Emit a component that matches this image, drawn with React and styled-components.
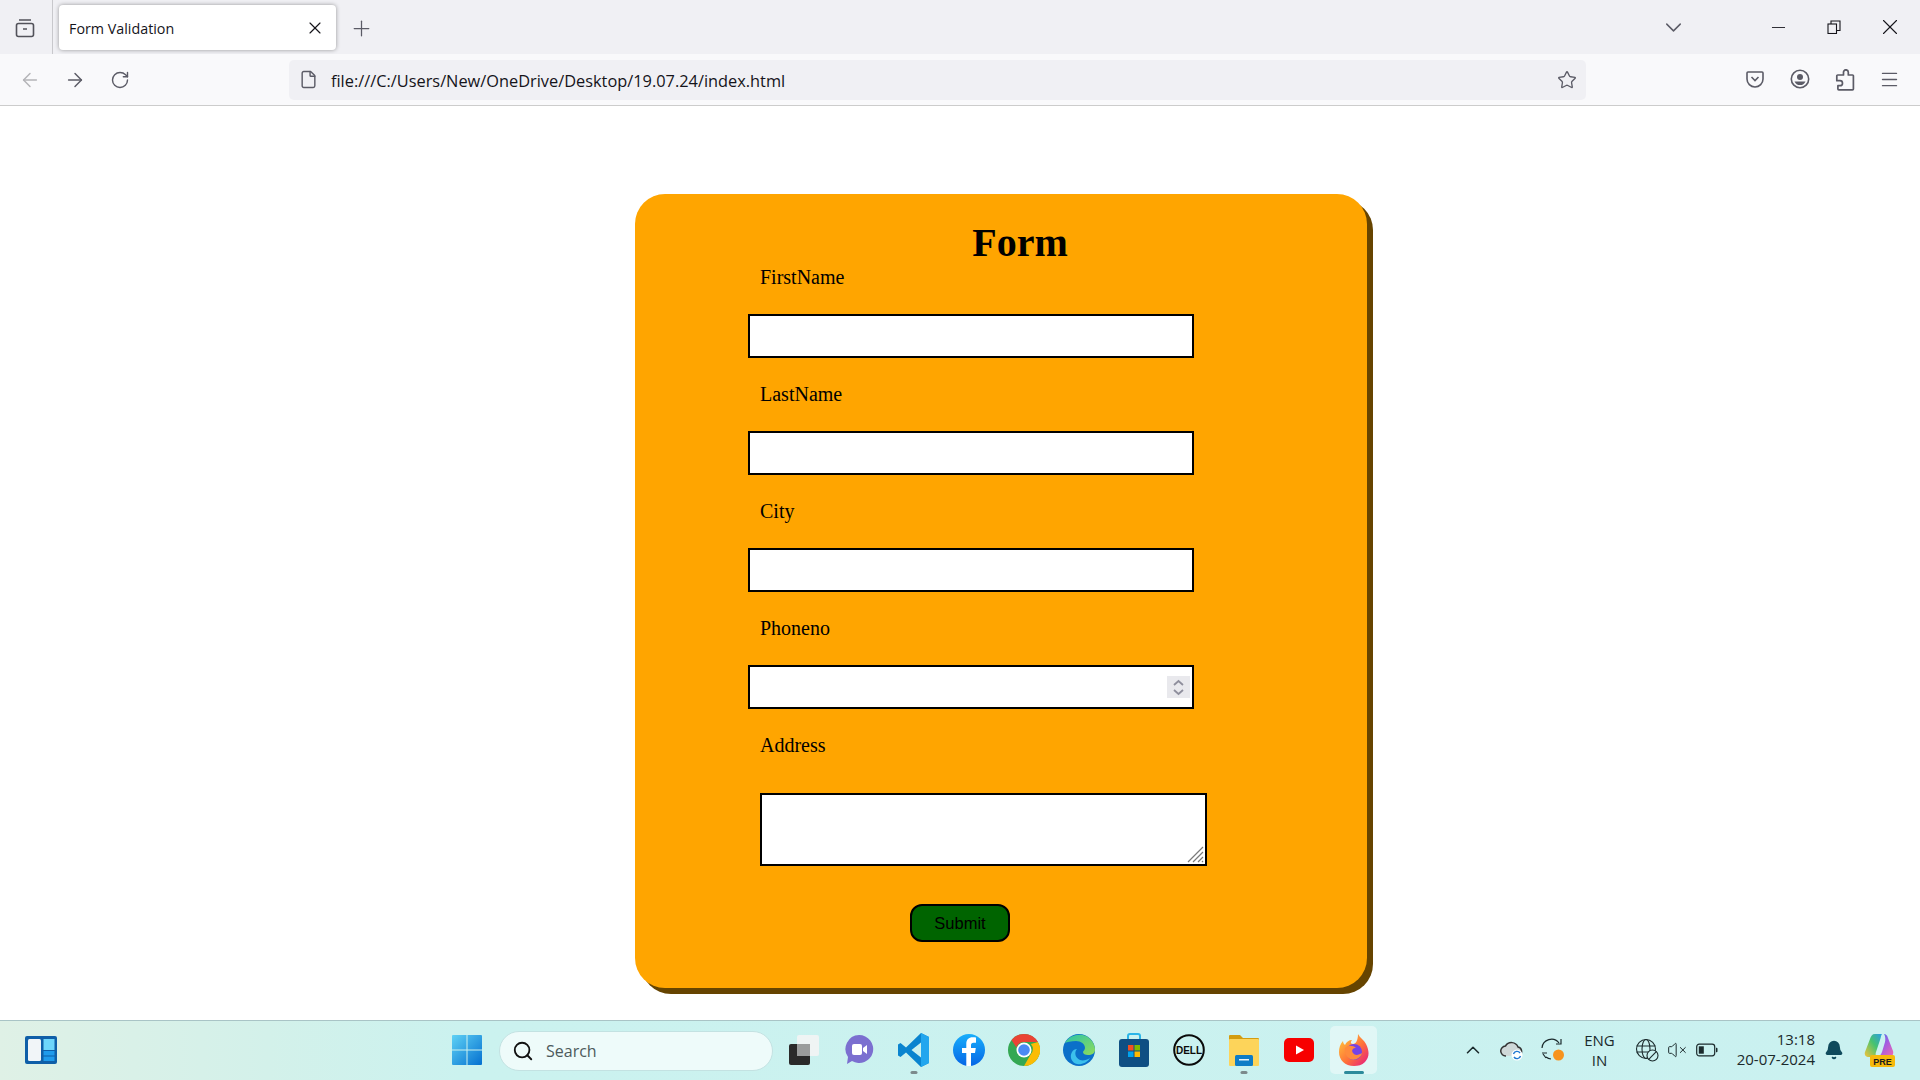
import React from 'react';
import styled, { createGlobalStyle } from 'styled-components';
import { ArrowLeft, ArrowRight, RotateCw, Star, Plus, X, ChevronDown, ChevronUp, Minus, Menu, Search, Bell, VolumeX, File } from 'lucide-react';

const Global = createGlobalStyle`
  html, body { margin: 0; padding: 0; background: #fff; overflow: hidden; }
  * { box-sizing: border-box; }
`;
const Screen = styled.div`
  width: 1920px; height: 1080px; display: flex; flex-direction: column;
  font-family: "Open Sans", "Noto Sans", sans-serif;
`;
const TitleBar = styled.div`
  height: 54px; background: #f0f0f4; display: flex; align-items: center; flex: none;
`;
const TabListSlot = styled.div`
  width: 53px; height: 54px; display: flex; align-items: center; justify-content: center;
  border-right: 1px solid #c8c8cc; color: #52525a; padding: 1px 2px 0 0;
`;
const Tab = styled.div`
  width: 277px; height: 45px; margin: 1px 0 0 6px; background: #fff; border-radius: 4px;
  box-shadow: 0 0 4px rgba(0,0,0,.38); display: flex; align-items: center; justify-content: space-between;
  padding: 1px 11px 0 10px; font-size: 14.3px; color: #15141a;
`;
const NewTab = styled.div`
  width: 30px; margin: 2px 0 0 10px; display: flex; justify-content: center; color: #5b5b66;
`;
const ListAll = styled.div`
  margin: 0 63px 0 auto; display: flex; color: #5b5b66;
`;
const WinBtn = styled.div`
  width: 56px; display: flex; align-items: center; justify-content: center; color: #15141a;
`;
const WinBtns = styled.div`
  display: flex; margin-right: 2px;
`;
const Toolbar = styled.div`
  height: 52px; flex: none; background: #f9f9fb; border-bottom: 1px solid #ccc;
  display: flex; align-items: center; padding: 0 8px 0 7px;
`;
const ToolBtn = styled.div`
  width: 45px; display: flex; justify-content: center; color: ${p => p.$dim ? '#b4b4b8' : '#5b5b66'};
`;
const UrlBar = styled.div`
  width: 1297px; height: 40px; margin-left: 147px; background: #f0f0f4; border-radius: 5px;
  display: flex; align-items: center; padding: 0 9px 0 10px; color: #5b5b66;
`;
const UrlText = styled.span`
  margin: 3px 0 0 13px; font-size: 16.35px; color: #15141a; flex: 1;
`;
const ToolEnd = styled.div`
  display: flex; margin-left: auto;
`;
const Page = styled.main`
  flex: 1; min-height: 0; background: #fff; display: flex; flex-direction: column; align-items: flex-start;
  padding: 88px 0 0 635px;
`;
const Card = styled.form`
  width: 732px; background: #ffa500; border-radius: 30px; box-shadow: 6px 6px 0 #664400;
  padding: 26px 0 46px 113px; font-family: "Liberation Serif", serif; color: #000;
  display: flex; flex-direction: column; align-items: flex-start;
`;
const Heading = styled.h1`
  width: 544px; margin: 0; text-align: center; font-size: 40px; line-height: 46px; font-weight: 700;
`;
const Label = styled.label`
  font-size: 20px; line-height: 23px; margin: 0 0 25px 12px; display: block;
`;
const Field = styled.div`
  position: relative; width: 446px; height: 44px; margin-bottom: 25px;
`;
const Input = styled.input`
  width: 100%; height: 100%; border: 2px solid #000; background: #fff; display: block; outline: none; padding: 0 6px;
`;
const Spin = styled.div`
  position: absolute; right: 4px; top: 11px; width: 23px; height: 22px; background: #e9e9ed;
  display: flex; align-items: center; justify-content: center;
`;
const AreaWrap = styled.div`
  position: relative; width: 447px; height: 73px; margin: 11px 0 0 12px;
`;
const Area = styled.textarea`
  display: block; width: 100%; height: 100%; border: 2px solid #000; background: #fff; outline: none; resize: none;
`;
const Grip = styled.svg`
  position: absolute; right: 3px; bottom: 3px; pointer-events: none;
`;
const Submit = styled.button`
  width: 100px; height: 38px; margin: 38px 0 0 162px; background: #006400; color: #000; border: 2px solid #000;
  border-radius: 12px; font-family: "Liberation Sans", sans-serif; font-size: 16.5px; padding: 0;
`;
const Taskbar = styled.footer`
  height: 60px; flex: none; border-top: 1px solid #a9c4c6; display: flex; align-items: center; padding-bottom: 2px;
  background: linear-gradient(90deg, #dff1e6 0%, #d3f1ea 14%, #cbf2ef 24%, #caf1f0 100%);
`;
const Widget = styled.div`
  width: 451px; padding-left: 25px; display: flex; align-items: center;
`;
const Slot = styled.div`
  width: ${p => p.$w || 55}px; height: 48px; flex: none; display: flex; align-items: center; justify-content: center; position: relative;
  border-radius: 5px;
`;
const ActiveSlot = styled(Slot)`
  width: 47px; margin-left: 4px; background: rgba(255,255,255,.42);
`;
const Dot = styled.span`
  position: absolute; bottom: 0; left: 50%; transform: translateX(-50%);
  width: 7px; height: 3px; border-radius: 2px; background: #7c8a8c;
`;
const ActiveDot = styled(Dot)`
  width: 20px; background: #2c8a9b;
`;
const SearchBox = styled.div`
  width: 274px; height: 40px; margin: 2px 3px 0 17px; flex: none; border-radius: 20px; background: #eefbfa; border: 1px solid #c3e2e2;
  display: flex; align-items: center; padding-left: 12px; gap: 12px; font-size: 16px; color: #4d5a5c;
`;
const Tray = styled.div`
  margin-left: 78px; display: flex; align-items: center; color: #1b2a2c; height: 48px;
`;
const TrayIcon = styled.div`
  width: ${p => p.$w}px; flex: none; display: flex; justify-content: center; align-items: center;
`;
const Lang = styled.div`
  width: 47px; margin: 0 6px 0 3px; flex: none; font-size: 15px; line-height: 20px; text-align: center; color: #1b2a2c;
`;
const Clock = styled.div`
  width: 90px; flex: none; font-size: 15px; line-height: 20px; text-align: right; color: #1b2a2c; margin-top: -2px;
`;

const TabsIcon = () => (
  <svg width="20" height="20" viewBox="0 0 20 20" fill="none" stroke="currentColor" strokeWidth="1.6">
    <rect x="1.5" y="5.5" width="17" height="13" rx="2" /><path d="M4 2h12M8 11h4" />
  </svg>
);
const RestoreIcon = () => (
  <svg width="14" height="14" viewBox="0 0 14 14" fill="none" stroke="currentColor" strokeWidth="1.1">
    <rect x="1" y="4" width="8.5" height="9.5" /><path d="M4 4V1h9v9.5H9.5" />
  </svg>
);
const PocketIcon = () => (
  <svg width="20" height="20" viewBox="0 0 20 20" fill="none" stroke="currentColor" strokeWidth="1.6">
    <path d="M3 3h14a1 1 0 0 1 1 1v6a8 8 0 0 1-16 0V4a1 1 0 0 1 1-1z" /><path d="M6.5 8l3.5 3.5L13.500 8" />
  </svg>
);
const AccountIcon = () => (
  <svg width="20" height="20" viewBox="0 0 20 20" fill="none">
    <circle cx="10" cy="10" r="8.700" stroke="currentColor" strokeWidth="1.6" />
    <circle cx="10" cy="8" r="3" fill="currentColor" /><path d="M4.500 12.500h11a6 6 0 0 1-11 0z" fill="currentColor" />
  </svg>
);
const ExtensionIcon = () => (
  <svg width="20" height="22" viewBox="0 0 20 22" fill="none" stroke="currentColor" strokeWidth="1.7" strokeLinejoin="round">
    <path d="M8.500 6V3.200a2.400 2.400 0 0 1 4.800 0V6h4.200a.9.900 0 0 1 .9.900V20a.9.900 0 0 1-.9.900H3.800a.9.900 0 0 1-.9-.9v-3.300H5a2.500 2.500 0 0 0 0-5H1.800V6.900A.9.900 0 0 1 2.700 6z" />
  </svg>
);
const WidgetsIcon = () => (
  <svg width="32" height="28" viewBox="0 0 32 28">
    <rect width="32" height="28" rx="2" fill="#0f5fa8" />
    <rect x="3" y="3" width="13" height="22" rx="1.500" fill="#f1f5f8" />
    <rect x="18.500" y="3" width="11" height="11" fill="#6ed6fb" />
    <rect x="18.500" y="15" width="11" height="4.500" fill="#1f9bec" />
    <rect x="18.500" y="20.500" width="11" height="4.500" fill="#1f9bec" />
  </svg>
);
const WinIcon = () => (
  <svg width="30" height="30" viewBox="0 0 30 30">
    <defs><linearGradient id="wg" x1="0" y1="0" x2="1" y2="1"><stop offset="0" stopColor="#5fd2f5" /><stop offset="1" stopColor="#0470d0" /></linearGradient></defs>
    <path d="M0 1a1 1 0 0 1 1-1h13.500v14.500H0zM15.500 0H29a1 1 0 0 1 1 1v13.500H15.500zM0 15.500h14.500V30H1a1 1 0 0 1-1-1zM15.500 15.500H30V29a1 1 0 0 1-1 1H15.500z" fill="url(#wg)" />
  </svg>
);
const TaskViewIcon = () => (
  <svg width="30" height="30" viewBox="0 0 30 30">
    <rect x="0" y="9" width="21" height="21" rx="2" fill="#2a2a2a" />
    <rect x="8" y="0" width="22" height="21" rx="2" fill="#f2f4f4" fillOpacity=".92" />
    <rect x="8" y="9" width="13" height="12" fill="#9a9c9c" />
  </svg>
);
const MeetIcon = () => (
  <svg width="30" height="32" viewBox="0 0 30 32">
    <path d="M15 1a14 14 0 1 1-7 26l-5 3 1-7A14 14 0 0 1 15 1z" fill="#7b6fd0" />
    <rect x="8" y="10" width="10" height="11" rx="2" fill="#fff" /><path d="M19 14l4-3v9l-4-3z" fill="#fff" />
  </svg>
);
const CodeIcon = () => (
  <svg width="32" height="34" viewBox="0 0 32 34">
    <path d="M23 0l8 4v26l-8 4-15-14.500L2.500 24 0 22.500v-11L2.500 10 8 14.500zM23 9.500L13.500 17 23 24.500z" fill="#0a84cf" />
    <path d="M23 0l8 4v26l-8 4z" fill="#22a6ee" />
  </svg>
);
const FbIcon = () => (
  <svg width="32" height="32" viewBox="0 0 32 32">
    <defs><linearGradient id="fbg" x1="0" y1="0" x2="0" y2="1"><stop offset="0" stopColor="#18aefb" /><stop offset="1" stopColor="#0566e6" /></linearGradient></defs>
    <circle cx="16" cy="16" r="16" fill="url(#fbg)" />
    <path d="M18 32V19h4l.8-5H18v-2.800c0-1.500.6-2.400 2.500-2.400H23V3.500C22 3.300 20.800 3.200 19.600 3.200c-3.800 0-6.300 2.300-6.300 6.500V14H9v5h4.300v13z" fill="#fff" />
  </svg>
);
const ChromeIcon = () => (
  <svg width="32" height="32" viewBox="0 0 32 32">
    <circle cx="16" cy="16" r="16" fill="#34a853" />
    <path d="M16 0a16 16 0 0 1 13.900 8H16a8 8 0 0 0-7.600 5.500L3.500 6A16 16 0 0 1 16 0z" fill="#ea4335" />
    <path d="M29.900 8A16 16 0 0 1 16 32l6.900-12A8 8 0 0 0 22.900 10z" fill="#fbbc04" />
    <circle cx="16" cy="16" r="7.500" fill="#fff" /><circle cx="16" cy="16" r="5.800" fill="#4a8af4" />
  </svg>
);
const EdgeIcon = () => (
  <svg width="32" height="32" viewBox="0 0 32 32">
    <defs><linearGradient id="eg" x1="0" y1="0" x2="1" y2="1"><stop offset="0" stopColor="#2bc3a8" /><stop offset="1" stopColor="#8fdc5a" /></linearGradient></defs>
    <circle cx="16" cy="16" r="16" fill="#0b70c9" />
    <path d="M2 9C6 1 16-1 23 2c6 3 9 9 9 14 0 3-3 5-7 5-3 0-5-1-5-3 0-1 2-2 2-4 0-4-4-7-9-7-5 0-9 1-11 2z" fill="url(#eg)" />
    <path d="M14 15c-3 3-2 9 3 11 3 1 7 0 10-2-3 5-9 7-13 6-5-1-8-7-5-12 1-2 3-3 5-3z" fill="#3cc0ec" />
  </svg>
);
const StoreIcon = () => (
  <svg width="30" height="34" viewBox="0 0 30 34">
    <path d="M9 7V3a2 2 0 0 1 2-2h8a2 2 0 0 1 2 2v4" fill="none" stroke="#2ab5e8" strokeWidth="2" />
    <rect x="0" y="6" width="30" height="28" rx="3" fill="#0f4f83" />
    <rect x="9" y="12" width="5.500" height="5.500" fill="#f25022" /><rect x="15.500" y="12" width="5.500" height="5.500" fill="#7fba00" />
    <rect x="9" y="18.500" width="5.500" height="5.500" fill="#00a4ef" /><rect x="15.500" y="18.500" width="5.500" height="5.500" fill="#ffb900" />
  </svg>
);
const DellIcon = () => (
  <svg width="32" height="32" viewBox="0 0 32 32">
    <circle cx="16" cy="16" r="14.800" fill="none" stroke="#0a0a0a" strokeWidth="2" />
    <text x="16" y="19.500" textAnchor="middle" fontFamily="Liberation Sans, sans-serif" fontWeight="700" fontSize="10" fill="#0a0a0a">DELL</text>
  </svg>
);
const FolderIcon = () => (
  <svg width="30" height="32" viewBox="0 0 30 32">
    <path d="M0 2a1 1 0 0 1 1-1h10l3 3h15a1 1 0 0 1 1 1v4H0z" fill="#d39c10" />
    <rect x="0" y="5" width="30" height="27" rx="1" fill="#fdd45a" />
    <rect x="6" y="21" width="18" height="11" rx="1.500" fill="#0e7cc6" /><rect x="10" y="25" width="10" height="1.500" fill="#e6f3fb" />
  </svg>
);
const YtIcon = () => (
  <svg width="30" height="24" viewBox="0 0 30 24">
    <rect width="30" height="24" rx="5" fill="#f70000" /><path d="M12 7.500l8 4.500-8 4.500z" fill="#fff" />
  </svg>
);
const FoxIcon = () => (
  <svg width="30" height="32" viewBox="0 0 30 32">
    <defs><linearGradient id="ff" x1="0" y1="0" x2="1" y2="1"><stop offset="0" stopColor="#ffd13a" /><stop offset=".55" stopColor="#ff7139" /><stop offset="1" stopColor="#e31587" /></linearGradient></defs>
    <path d="M19 0c2 4 6 6 8 10 4 8 3 14-1 18-3 3-7 4-11 4C6 32 0 26 0 18c0-4 1-8 4-11 0 2 1 3 2 4 1-3 4-5 7-5-2 3-1 4 1 4 3 0 5-4 5-10z" fill="url(#ff)" />
    <circle cx="15" cy="18" r="8" fill="#7542e5" />
    <path d="M6 14c3-3 8-3 11 0-3 0-5 2-3 5 2 3 6 2 9 0-1 5-7 8-12 6-4-2-6-7-5-11z" fill="#ff8a3c" />
  </svg>
);
const CloudIcon = () => (
  <svg width="24" height="22" viewBox="0 0 24 22">
    <path d="M6 17a5 5 0 0 1-.500-10A7 7 0 0 1 18 8a4.500 4.500 0 0 1 1 8.500" fill="#cfd8d8" stroke="#333" strokeWidth="1.500" />
    <circle cx="17" cy="16" r="5.500" fill="#fff" /><path d="M13.500 15a3.600 3.600 0 0 1 6.500-1M20.500 17a3.600 3.600 0 0 1-6.500 1" fill="none" stroke="#1f78d1" strokeWidth="1.400" />
  </svg>
);
const SyncIcon = () => (
  <svg width="24" height="24" viewBox="0 0 24 24" fill="none" stroke="#1b2a2c" strokeWidth="1.200">
    <path d="M1 10a9.500 9.500 0 0 1 17-5M20 1v5h-5M2 16l3 4M1 15h5M5 19a9.500 9.500 0 0 0 5 2" />
    <circle cx="17.500" cy="17" r="5.500" fill="#f7931e" stroke="none" />
  </svg>
);
const GlobeBlocked = () => (
  <svg width="24" height="24" viewBox="0 0 24 24" fill="none" stroke="#1b2a2c" strokeWidth="1.100">
    <circle cx="11" cy="11" r="9.500" /><ellipse cx="11" cy="11" rx="4" ry="9.500" /><path d="M1.500 8h19M1.500 14h12" />
    <circle cx="17.500" cy="17.500" r="5.500" fill="#caf1f0" /><path d="M13.700 21.300l7.600-7.600" />
  </svg>
);
const BatteryIcon = () => (
  <svg width="22" height="14" viewBox="0 0 22 14" fill="none">
    <rect x=".7" y="1.200" width="18" height="11.600" rx="2.500" stroke="#1b2a2c" strokeWidth="1.200" />
    <rect x="2.800" y="3.300" width="5" height="7.400" fill="#1b2a2c" /><path d="M20 4.800h.5a1 1 0 0 1 1 1v2.400a1 1 0 0 1-1 1H20z" fill="#1b2a2c" />
  </svg>
);
const CopilotIcon = () => (
  <svg width="34" height="34" viewBox="0 0 34 34">
    <defs>
      <linearGradient id="cg1" x1="0" y1="1" x2="1" y2="0"><stop offset="0" stopColor="#f5c33a" /><stop offset=".55" stopColor="#46c36f" /><stop offset="1" stopColor="#2a9be8" /></linearGradient>
      <linearGradient id="cg2" x1="0" y1="0" x2="1" y2="1"><stop offset="0" stopColor="#2f7fe8" /><stop offset=".5" stopColor="#a45ce0" /><stop offset="1" stopColor="#f06ab0" /></linearGradient>
    </defs>
    <path d="M23 1h-7c-3 0-4 2-5 5L6 19c-1 3 1 5 4 5h10c-3 0-4-2-3-5l4-12c1-3 1-5 2-6z" fill="url(#cg1)" transform="translate(-3 0)" />
    <path d="M22 1c2 0 3 1 4 4l5 13c1 3-1 6-4 6H14c3 0 5-2 6-5l3-10c.5-2 .5-6-1-8z" fill="url(#cg2)" />
    <rect x="8" y="22" width="25" height="12" rx="2" fill="#f6b90c" />
    <text x="20.500" y="31.500" textAnchor="middle" fontFamily="Liberation Sans, sans-serif" fontWeight="700" fontSize="9" fill="#1a1a1a">PRE</text>
  </svg>
);

export default function App() {
  return (
    <Screen>
      <Global />
      <TitleBar>
        <TabListSlot><TabsIcon /></TabListSlot>
        <Tab>Form Validation<X size={20} strokeWidth={1.4} color="#15141a" /></Tab>
        <NewTab><Plus size={25} strokeWidth={1.2} /></NewTab>
        <ListAll><ChevronDown size={27} strokeWidth={1.3} /></ListAll>
        <WinBtns>
          <WinBtn><Minus size={21} strokeWidth={1} /></WinBtn>
          <WinBtn><RestoreIcon /></WinBtn>
          <WinBtn><X size={26} strokeWidth={1} /></WinBtn>
        </WinBtns>
      </TitleBar>
      <Toolbar>
        <ToolBtn $dim><ArrowLeft size={22} strokeWidth={1.6} /></ToolBtn>
        <ToolBtn><ArrowRight size={22} strokeWidth={1.6} /></ToolBtn>
        <ToolBtn><RotateCw size={20} strokeWidth={1.7} /></ToolBtn>
        <UrlBar>
          <File size={19} strokeWidth={1.8} />
          <UrlText>file:///C:/Users/New/OneDrive/Desktop/19.07.24/index.html</UrlText>
          <Star size={20} strokeWidth={1.6} />
        </UrlBar>
        <ToolEnd>
          <ToolBtn><PocketIcon /></ToolBtn>
          <ToolBtn><AccountIcon /></ToolBtn>
          <ToolBtn><ExtensionIcon /></ToolBtn>
          <ToolBtn><Menu size={21} strokeWidth={1.6} /></ToolBtn>
        </ToolEnd>
      </Toolbar>
      <Page>
        <Card onSubmit={e => e.preventDefault()}>
          <Heading>Form</Heading>
          <Label>FirstName</Label>
          <Field><Input type="text" /></Field>
          <Label>LastName</Label>
          <Field><Input type="text" /></Field>
          <Label>City</Label>
          <Field><Input type="text" /></Field>
          <Label>Phoneno</Label>
          <Field>
            <Input type="text" />
            <Spin>
              <svg width="11" height="17" viewBox="0 0 11 17" fill="none" stroke="#8f8f9d" strokeWidth="1.800"><path d="M1 6l4.500-4L10 6M1 11l4.500 4 4.500-4" /></svg>
            </Spin>
          </Field>
          <Label>Address</Label>
          <AreaWrap>
            <Area />
            <Grip width="17" height="17" viewBox="0 0 17 17" stroke="#7a7a7a" strokeWidth="1.200">
              <path d="M1 16L16 1M6 16L16 6M11 16l5-5M15 16l1-1" />
            </Grip>
          </AreaWrap>
          <Submit type="submit">Submit</Submit>
        </Card>
      </Page>
      <Taskbar>
        <Widget><WidgetsIcon /></Widget>
        <Slot $w={31}><WinIcon /></Slot>
        <SearchBox><Search size={22} strokeWidth={2} color="#111" />Search</SearchBox>
        <Slot><TaskViewIcon /></Slot>
        <Slot><MeetIcon /></Slot>
        <Slot><CodeIcon /><Dot /></Slot>
        <Slot><FbIcon /></Slot>
        <Slot><ChromeIcon /></Slot>
        <Slot><EdgeIcon /></Slot>
        <Slot><StoreIcon /></Slot>
        <Slot><DellIcon /></Slot>
        <Slot><FolderIcon /><Dot /></Slot>
        <Slot><YtIcon /></Slot>
        <ActiveSlot><FoxIcon /><ActiveDot /></ActiveSlot>
        <Tray>
          <TrayIcon $w={36}><ChevronUp size={22} strokeWidth={1.7} /></TrayIcon>
          <TrayIcon $w={42}><CloudIcon /></TrayIcon>
          <TrayIcon $w={40}><SyncIcon /></TrayIcon>
          <Lang>ENG<br />IN</Lang>
          <TrayIcon $w={36}><GlobeBlocked /></TrayIcon>
          <TrayIcon $w={24}><VolumeX size={20} strokeWidth={1.2} /></TrayIcon>
          <TrayIcon $w={36}><BatteryIcon /></TrayIcon>
          <Clock>13:18<br />20-07-2024</Clock>
          <TrayIcon $w={38}><Bell size={20} fill="#0f4a5c" color="#0f4a5c" /></TrayIcon>
          <TrayIcon $w={52}><CopilotIcon /></TrayIcon>
        </Tray>
      </Taskbar>
    </Screen>
  );
}
